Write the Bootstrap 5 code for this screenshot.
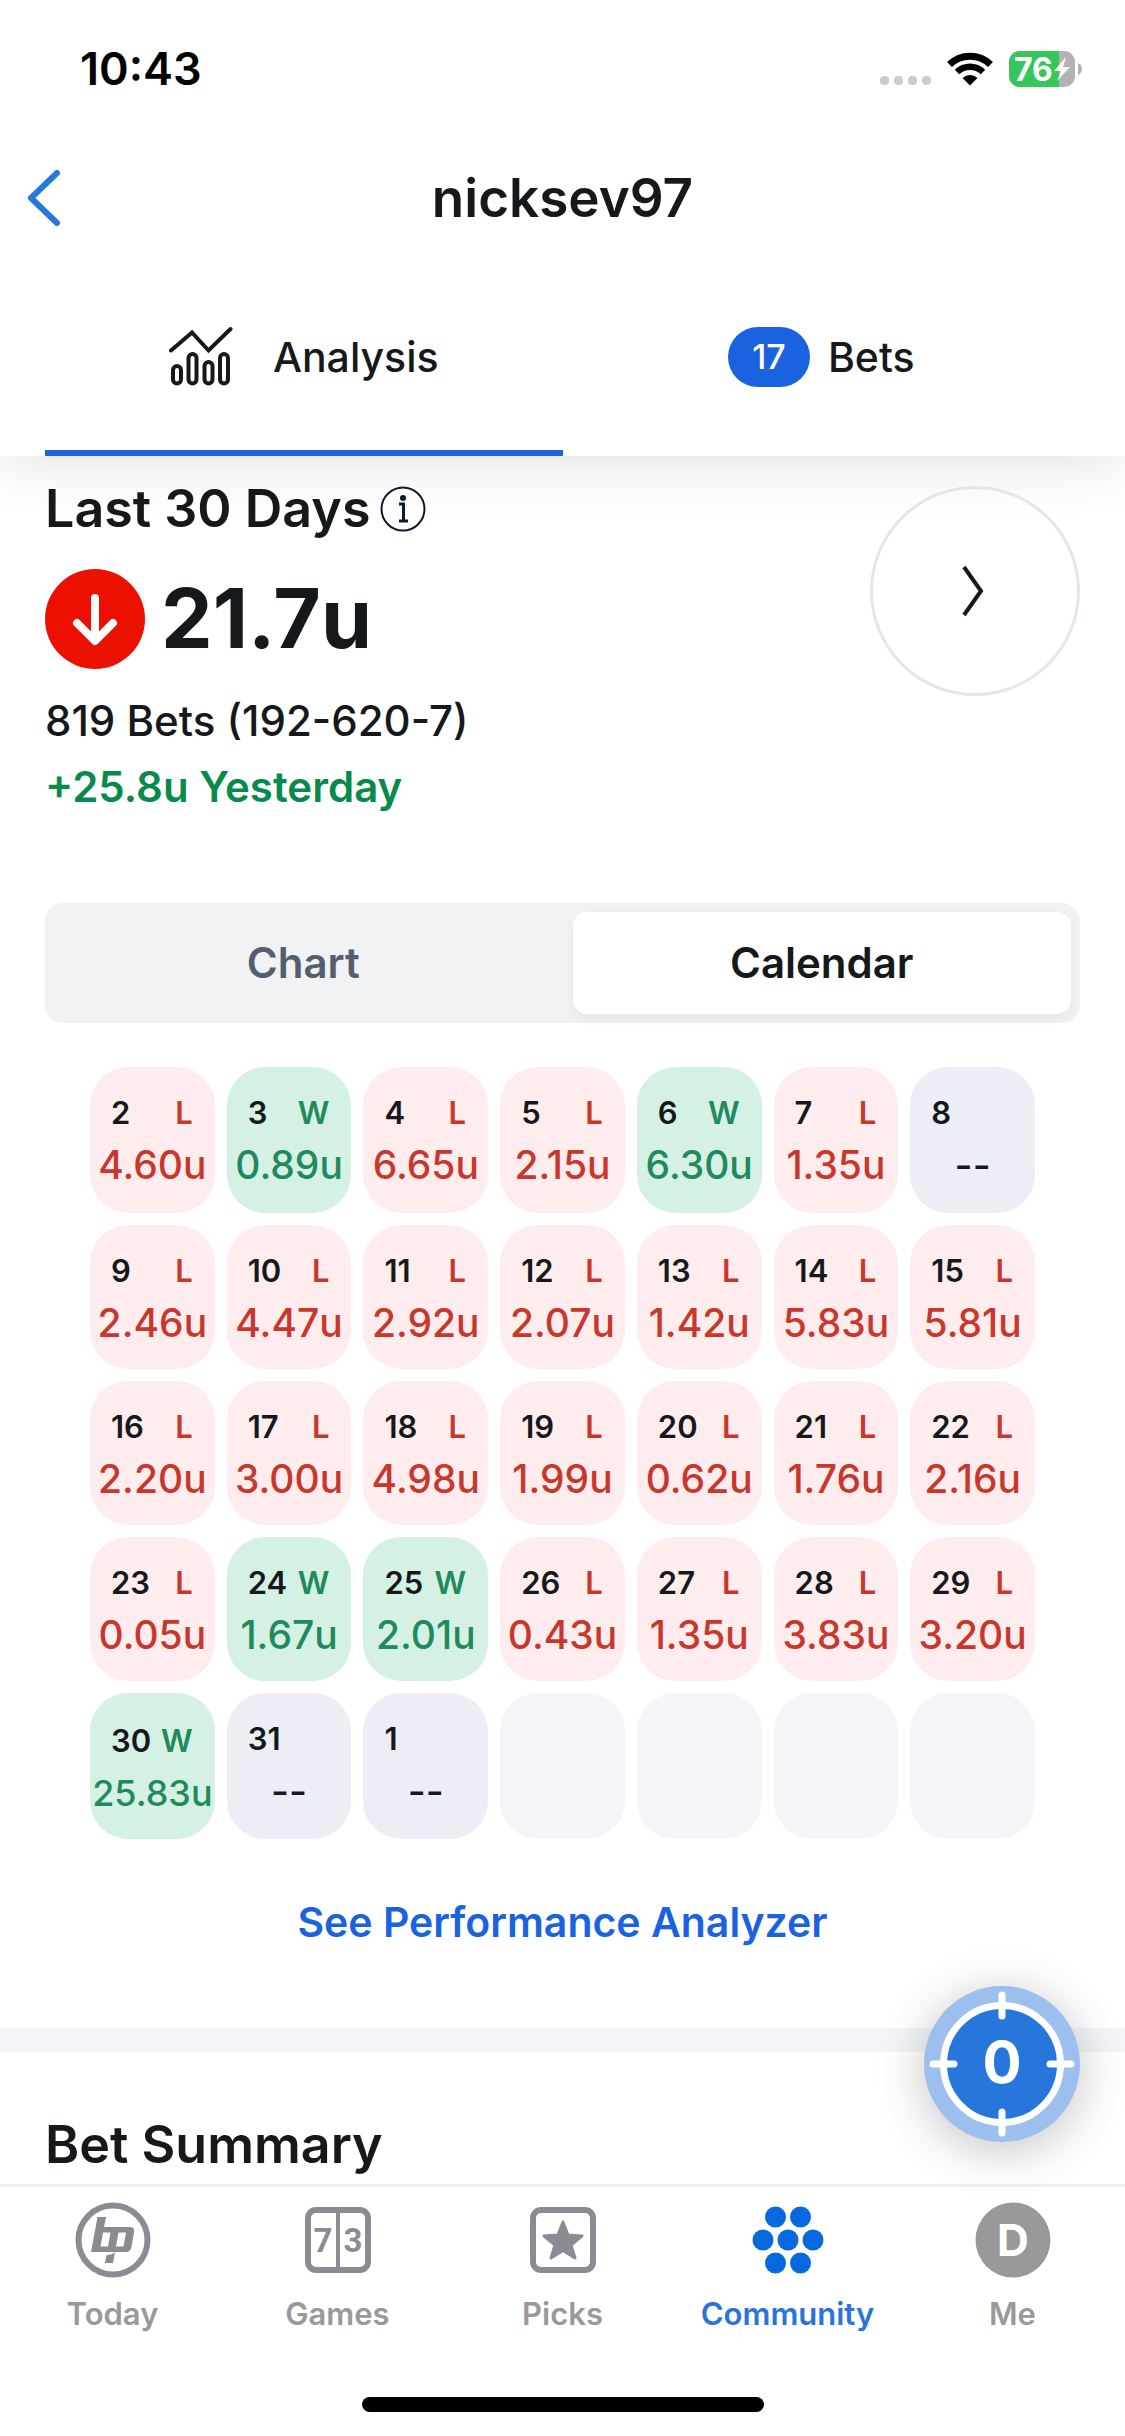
<!DOCTYPE html>
<html lang="en">
<head>
<meta charset="utf-8">
<meta name="viewport" content="width=device-width, initial-scale=1">
<title>nicksev97</title>
<link href="https://cdn.jsdelivr.net/npm/bootstrap@5.3.0/dist/css/bootstrap.min.css" rel="stylesheet">
<style>
:root{--ink:#16191c;--brand:#1a62e0;--win:#218a5c;--loss:#c8372d;--edge:45px}
body{font-family:Inter,"Liberation Sans",sans-serif;color:var(--ink);background:#fff;min-height:100vh;font-size:42px;line-height:48px}
button{font-family:inherit}
.app{min-height:100vh}
.statusbar{height:138px;padding:0 42px 0 80px;color:#000}
.clock{font-size:45px;font-weight:600}
.batt text{font:700 32px Inter,sans-serif;fill:#fff}
.topbar{height:120px;padding:0 24px}
.topbar .side{width:48px}
.topbar h1{font-size:53px;line-height:64px;font-weight:600}
.tabs{height:198px;padding:0 var(--edge);box-shadow:0 12px 50px rgba(0,0,0,.1);clip-path:inset(0 0 -90px 0)}
.tabs button{flex:1;border:0;background:none;color:var(--ink);font-size:41px;font-weight:500;padding-top:6px;border-bottom:6px solid transparent}
.tabs button.active{border-color:var(--brand)}
.tabs .icon-tab{gap:40px}
.tabs .count-tab{gap:18px}
.count{background:var(--brand);color:#fff;font-size:34px;line-height:60px;font-weight:500;width:82px;border-radius:30px}
.summary{padding:30px var(--edge) 0}
.summary h2,.betsum h2{font-size:52px;line-height:46px;font-weight:600}
.headline{gap:10px}
.total{margin-top:37px}
.units{font-size:82px;line-height:100px;font-weight:700}
.record{font-weight:500;margin-top:28px}
.gain{color:#078a4a;font-weight:600;margin-top:18px}
.next{width:210px;height:210px;border:3px solid #e3e7ea;background:none}
.segment{margin:92px var(--edge) 0;background:#f0f2f4;border-radius:18px;padding:9px;height:120px;gap:20px}
.segment button{flex:1;border:0;background:none;border-radius:14px;font-weight:600;color:#555e6c}
.segment button.active{background:#fff;color:var(--ink);box-shadow:0 4px 12px rgba(0,0,0,.06)}
.cal{display:grid;grid-template-columns:repeat(7,1fr);gap:12px;margin:44px 90px 0}
.day{min-height:144px;border-radius:38px;background:#f3f5f8;padding-top:24px;color:var(--ink);font-weight:600}
.day .top{padding:0 22px 0 21px;font-size:31px;line-height:44px}
.day .amt{font-size:39px;line-height:60px;font-weight:500;text-align:center}
.win{background:#d4f1e4}.win .res,.win .amt{color:var(--win)}
.loss{background:#ffeded}.loss .res,.loss .amt{color:var(--loss)}
.idle{background:#ecedf5;min-height:146px}
.day.fit{padding-top:26px}
.day.fit .amt{font-size:36px}
.see{color:var(--brand);font-size:41px;font-weight:600;margin-top:59px;text-decoration:none}
.band{height:24px;background:#f3f5f8;margin-top:82px}
.betsum{padding:70px var(--edge) 0}
.tabbar{border-top:3px solid #f0f0f0;background:#fff;height:252px}
.tabbar a{flex:1;text-decoration:none;color:#999;font-size:31px;line-height:40px;font-weight:600;padding-top:15px}
.tabbar a.active{color:#2a74d9}
.tabbar svg{margin-bottom:16px}
.home{width:402px;height:15px;border-radius:8px;background:#000;bottom:24px}
.fab{width:156px;height:156px;right:45px;bottom:294px;border:0;background:#9dbfee;padding:0;box-shadow:0 8px 50px rgba(0,0,0,.24)}
</style>
</head>
<body>
<div class="app d-flex flex-column position-relative">
<header class="position-relative bg-white">
 <div class="statusbar d-flex align-items-center justify-content-between">
  <span class="clock">10:43</span>
  <span class="d-flex align-items-center gap-3">
   <svg width="51" height="40" viewBox="0 0 51 40" fill="#ccc"><rect y="27" width="9" height="9" rx="4"/><rect x="14" y="27" width="9" height="9" rx="4"/><rect x="28" y="27" width="9" height="9" rx="4"/><rect x="42" y="27" width="9" height="9" rx="4"/></svg>
   <svg width="46" height="34" viewBox="0 0 46 34" fill="none" stroke="#000"><path d="M2.500 12.500a29.500 29.500 0 0 1 41 0" stroke-width="7"/><path d="M10 20a19 19 0 0 1 26 0" stroke-width="6.500"/><path d="M15.500 26a11 11 0 0 1 15 0L23 33.500z" fill="#000" stroke="none"/></svg>
   <svg class="batt" width="74" height="38" viewBox="0 0 74 38"><defs><clipPath id="b"><rect y="1" width="66" height="36" rx="11"/></clipPath></defs><g clip-path="url(#b)"><path fill="#b3b3b3" d="M0 0h66v38H0z"/><path fill="#35c759" d="M0 0h50v38H0z"/></g><path d="M69 13q4 2 4 6t-4 6z" fill="#b3b3b3"/><text x="5" y="31">76</text><path d="M57 7L45 21h7l-4 10 13-14h-7z" fill="#fff"/></svg>
  </span>
 </div>
 <div class="topbar d-flex align-items-center justify-content-between">
  <button class="btn p-0 border-0 side text-start" aria-label="Back"><svg width="40" height="60" viewBox="0 0 40 60" fill="none" stroke="#2878dc" stroke-width="6" stroke-linecap="round" stroke-linejoin="round"><path d="M33 5L7 30l26 25"/></svg></button>
  <h1 class="m-0">nicksev97</h1>
  <span class="side"></span>
 </div>
 <nav class="tabs d-flex">
  <button class="icon-tab active d-flex align-items-center justify-content-center"><svg width="64" height="64" viewBox="0 0 64 64" fill="none" stroke="#16191c" stroke-width="4" stroke-linecap="round"><path d="M2 25.500L23 7.500l16.500 18L61.500 4"/><rect x="4" y="41" width="8" height="17.500" rx="4"/><rect x="19.500" y="29" width="8" height="29.500" rx="4"/><rect x="35.500" y="37" width="8" height="21.500" rx="4"/><rect x="51" y="29" width="8" height="29.500" rx="4"/></svg>Analysis</button>
  <button class="count-tab d-flex align-items-center justify-content-center"><span class="count">17</span>Bets</button>
 </nav>
</header>
<main class="flex-grow-1 d-flex flex-column">
 <section class="summary d-flex justify-content-between align-items-start position-relative">
  <div>
   <div class="headline d-flex align-items-center"><h2 class="m-0">Last 30 Days</h2><svg width="46" height="46" viewBox="0 0 46 46" fill="none" stroke="#0c1a30"><circle cx="23" cy="23" r="21.500" stroke-width="2"/><path d="M19 18h4.500v17M19 35h9" stroke-width="3"/><circle cx="23" cy="12" r="3" fill="#0c1a30" stroke="none"/></svg></div>
   <div class="total d-flex align-items-center gap-3"><svg width="100" height="100" viewBox="0 0 100 100"><circle cx="50" cy="50" r="50" fill="#eb1000"/><path d="M50 29v42M32 54l18 18 18-18" fill="none" stroke="#fff" stroke-width="8" stroke-linecap="round" stroke-linejoin="round"/></svg><span class="units">21.7u</span></div>
   <div class="record">819 Bets (192-620-7)</div>
   <div class="gain">+25.8u Yesterday</div>
  </div>
  <button class="next rounded-circle" aria-label="Next"><svg width="30" height="54" viewBox="0 0 30 54" fill="none" stroke="#16191c" stroke-width="4"><path d="M4 3l17 24L4 51"/></svg></button>
 </section>
 <div class="segment d-flex"><button>Chart</button><button class="active">Calendar</button></div>
 <section class="cal" id="cal"></section>
 <a class="see text-center" href="#">See Performance Analyzer</a>
 <div class="band"></div>
 <section class="betsum"><h2 class="m-0">Bet Summary</h2></section>
</main>
<nav class="tabbar d-flex position-relative align-items-start">
 <a href="#" class="d-flex flex-column align-items-center"><svg width="76" height="76" viewBox="0 0 76 76" fill="#8a8b93"><circle cx="38" cy="38" r="34.500" fill="none" stroke="#8a8b93" stroke-width="6"/><path fill-rule="evenodd" d="M22.500 15h8.500l-2 10h26q5 0 4 5l-2.500 15q-1 5-5.500 5H16zM28 30.500L25.500 44.500h7.500L35.500 30.500zM43.500 30.500L41 44.500h7.500L51 30.500z"/><path d="M31.500 53q6 0 8.500-3l-2 11h-8z"/></svg>Today</a>
 <a href="#" class="d-flex flex-column align-items-center"><svg width="76" height="76" viewBox="0 0 76 76" fill="none" stroke="#8a8b93"><rect x="8" y="8" width="60" height="60" rx="8" stroke-width="6"/><path d="M38 8v60" stroke-width="4"/><g fill="#8a8b93" stroke="none" font-family="Roboto" font-size="33" font-weight="700" text-anchor="middle"><text x="23" y="50">7</text><text x="53" y="50">3</text></g></svg>Games</a>
 <a href="#" class="d-flex flex-column align-items-center"><svg width="76" height="76" viewBox="0 0 76 76" fill="none" stroke="#8a8b93"><rect x="8" y="8" width="60" height="60" rx="8" stroke-width="6"/><path d="M38 20l5 13 14 1-11 9 4 13-12-7.500L26 56l4-13-11-9 14-1z" fill="#8a8b93" stroke-width="3" stroke-linejoin="round"/></svg>Picks</a>
 <a href="#" class="active d-flex flex-column align-items-center"><svg width="76" height="76" viewBox="0 0 76 76" fill="#0769de"><circle cx="25.500" cy="15" r="10.500"/><circle cx="50.500" cy="15" r="10.500"/><circle cx="13" cy="38" r="10.500"/><circle cx="38" cy="38" r="10.500"/><circle cx="63" cy="38" r="10.500"/><circle cx="25.500" cy="61" r="10.500"/><circle cx="50.500" cy="61" r="10.500"/></svg>Community</a>
 <a href="#" class="d-flex flex-column align-items-center"><svg width="76" height="76" viewBox="0 0 76 76"><circle cx="38" cy="38" r="37.500" fill="#999"/><text x="38" y="54" text-anchor="middle" font-size="44" font-weight="700" fill="#fff">D</text></svg>Me</a>
 <span class="home position-absolute start-50 translate-middle-x"></span>
</nav>
<button class="fab rounded-circle position-absolute" aria-label="Bet slip, 0 bets"><svg width="156" height="156" viewBox="0 0 156 156"><circle cx="78" cy="78" r="58.500" fill="#2676db" stroke="#fff" stroke-width="7"/><path d="M78 9v21M78 126v21M9 78h21M126 78h21" stroke="#fff" stroke-width="7" stroke-linecap="round"/><text x="78" y="97" text-anchor="middle" font-size="58" font-weight="700" fill="#fff">0</text></svg></button>
</div>
<script>
const days = [[2,'L','4.60'],[3,'W','0.89'],[4,'L','6.65'],[5,'L','2.15'],[6,'W','6.30'],[7,'L','1.35'],[8],
[9,'L','2.46'],[10,'L','4.47'],[11,'L','2.92'],[12,'L','2.07'],[13,'L','1.42'],[14,'L','5.83'],[15,'L','5.81'],
[16,'L','2.20'],[17,'L','3.00'],[18,'L','4.98'],[19,'L','1.99'],[20,'L','0.62'],[21,'L','1.76'],[22,'L','2.16'],
[23,'L','0.05'],[24,'W','1.67'],[25,'W','2.01'],[26,'L','0.43'],[27,'L','1.35'],[28,'L','3.83'],[29,'L','3.20'],
[30,'W','25.83'],[31],[1],[],[],[],[]];
document.getElementById('cal').innerHTML = days.map(([d, r, u]) => {
  if (!d) return '<div class="day"></div>';
  const kind = r === 'W' ? 'win' : r === 'L' ? 'loss' : 'idle';
  const fit = u && u.length > 4 ? ' fit' : '';
  return `<div class="day ${kind}${fit}"><div class="top d-flex justify-content-between"><span>${d}</span><span class="res">${r || ''}</span></div><div class="amt">${u ? u + 'u' : '--'}</div></div>`;
}).join('');
</script>
<script src="https://cdn.jsdelivr.net/npm/bootstrap@5.3.0/dist/js/bootstrap.bundle.min.js"></script>
</body>
</html>
